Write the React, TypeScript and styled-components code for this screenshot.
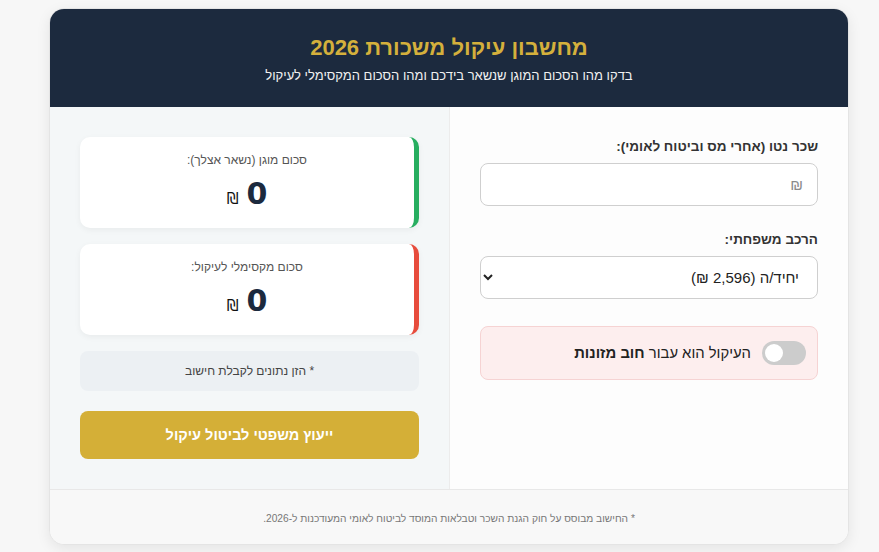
import React, { useState } from "react";
import styled, { createGlobalStyle } from "styled-components";

const GlobalStyle = createGlobalStyle`
    html, body {
        margin: 0;
        padding: 0;
        background: #f7f7f7;
    }
    body {
        font-family: "Liberation Sans", Arial, "DejaVu Sans", sans-serif;
        direction: rtl;
    }
    * { box-sizing: border-box; }
`

const Page = styled.div`
    width: 879px;
    height: 552px;
    padding: 8px 30px 0 50px;
`

const Card = styled.div`
    width: 800px;
    border-radius: 15px;
    overflow: hidden;
    background: #fff;
    box-shadow: 0 4px 14px rgba(0, 0, 0, 0.08);
    border: 1px solid #e4e4e4;
`

const Header = styled.header`
    background: #1c2a3e;
    height: 98px;
    text-align: center;
    padding-top: 24px;
    h1 {
        margin: 0;
        color: #d4b03c;
        font-size: 22px;
        font-weight: 700;
        line-height: 30px;
    }
    p {
        margin: 4px 0 0;
        color: #f1f1f1;
        font-size: 13px;
        line-height: 18px;
    }
`

const Body = styled.div`
    display: grid;
    grid-template-columns: 399px 400px;
    border-bottom: 1px solid #e8e8e8;
`

const FormCol = styled.section`
    background: #fdfdfd;
    padding: 30px;
    border-left: 1px solid #ececec;
`

const Field = styled.div`
    margin-bottom: 24px;
`

const Label = styled.label`
    display: block;
    font-size: 13.5px;
    font-weight: 700;
    color: #333;
    line-height: 20px;
    margin-bottom: 6px;
`

const Input = styled.input`
    width: 100%;
    height: 43px;
    border: 1px solid #cfcfcf;
    border-radius: 8px;
    padding: 0 14px;
    font-size: 15px;
    font-family: inherit;
    background: #fff;
    &::placeholder { color: #8a8a8a; }
`

const Select = styled.select`
    width: 100%;
    height: 43px;
    border: 1px solid #cfcfcf;
    border-radius: 8px;
    padding: 0 14px;
    font-size: 15px;
    font-family: inherit;
    color: #222;
    background: #fff;
`

const AlimonyBox = styled.div`
    margin-top: 27px;
    height: 54px;
    display: flex;
    align-items: center;
    gap: 11px;
    padding: 0 11px;
    background: #fdeeee;
    border: 1px solid #f6d3d3;
    border-radius: 8px;
    font-size: 14.8px;
    color: #222;
    b { font-weight: 700; }
`

const Switch = styled.button<{ $on: boolean }>`
    position: relative;
    width: 44px;
    height: 24px;
    border: none;
    border-radius: 12px;
    padding: 0;
    background: ${p => (p.$on ? "#27ae60" : "#cccccc")};
    cursor: pointer;
    flex-shrink: 0;
    &::after {
        content: "";
        position: absolute;
        top: 3px;
        left: ${p => (p.$on ? "23px" : "3px")};
        width: 18px;
        height: 18px;
        border-radius: 50%;
        background: #fff;
    }
`

const ResultCol = styled.section`
    background: #f4f7f8;
    padding: 30px 30px 30px 31px;
    display: flex;
    flex-direction: column;
`

const ResultCard = styled.div<{ $accent: string }>`
    background: #fff;
    height: 91px;
    border-radius: 10px;
    border-right: 5px solid ${p => p.$accent};
    box-shadow: 0 2px 6px rgba(0, 0, 0, 0.05);
    text-align: center;
    padding-top: 14px;
    margin-bottom: 16px;
`

const ResultLabel = styled.div`
    font-size: 12px;
    color: #555;
    line-height: 18px;
`

const ResultValue = styled.div`
    margin-top: 7px;
    display: flex;
    justify-content: center;
    align-items: baseline;
    gap: 8px;
    color: #1c2a3e;
    font-family: "DejaVu Sans", "Liberation Sans", sans-serif;
    font-size: 30px;
    font-weight: 700;
    line-height: 36px;
`

const Currency = styled.span`
    font-size: 15px;
    font-weight: 400;
    color: #111;
`

const Note = styled.div`
    background: #ecf0f3;
    border-radius: 8px;
    height: 40px;
    display: flex;
    align-items: center;
    justify-content: center;
    font-size: 12px;
    color: #444;
    margin-bottom: 20px;
`

const LawyerButton = styled.button`
    height: 48px;
    border: none;
    border-radius: 8px;
    background: #d4af37;
    color: #fff;
    font-family: inherit;
    font-size: 14.5px;
    font-weight: 700;
    cursor: pointer;
`

const Footer = styled.footer`
    background: #f8f8f8;
    height: 54px;
    display: flex;
    align-items: center;
    justify-content: center;
    font-size: 10.2px;
    color: #777;
    padding-top: 2px;
`

export default function App() {
    const [alimony, setAlimony] = useState(false)
    return (
        <>
            <GlobalStyle />
            <Page>
                <Card>
                    <Header>
                        <h1>מחשבון עיקול משכורת 2026</h1>
                        <p>בדקו מהו הסכום המוגן שנשאר בידכם ומהו הסכום המקסימלי לעיקול</p>
                    </Header>
                    <Body>
                        <FormCol>
                            <Field>
                                <Label>שכר נטו (אחרי מס וביטוח לאומי):</Label>
                                <Input placeholder="₪" />
                            </Field>
                            <Field>
                                <Label>הרכב משפחתי:</Label>
                                <Select defaultValue="single">
                                    <option value="single">יחיד/ה (2,596 ₪)</option>
                                </Select>
                            </Field>
                            <AlimonyBox>
                                <Switch $on={alimony} onClick={() => setAlimony(!alimony)} />
                                <span>העיקול הוא עבור <b>חוב מזונות</b></span>
                            </AlimonyBox>
                        </FormCol>
                        <ResultCol>
                            <ResultCard $accent="#27ae60">
                                <ResultLabel>סכום מוגן (נשאר אצלך):</ResultLabel>
                                <ResultValue><span>0</span><Currency>₪</Currency></ResultValue>
                            </ResultCard>
                            <ResultCard $accent="#e74c3c">
                                <ResultLabel>סכום מקסימלי לעיקול:</ResultLabel>
                                <ResultValue><span>0</span><Currency>₪</Currency></ResultValue>
                            </ResultCard>
                            <Note>* הזן נתונים לקבלת חישוב</Note>
                            <LawyerButton>ייעוץ משפטי לביטול עיקול</LawyerButton>
                        </ResultCol>
                    </Body>
                    <Footer>* החישוב מבוסס על חוק הגנת השכר וטבלאות המוסד לביטוח לאומי המעודכנות ל-2026.</Footer>
                </Card>
            </Page>
        </>
    )
}
